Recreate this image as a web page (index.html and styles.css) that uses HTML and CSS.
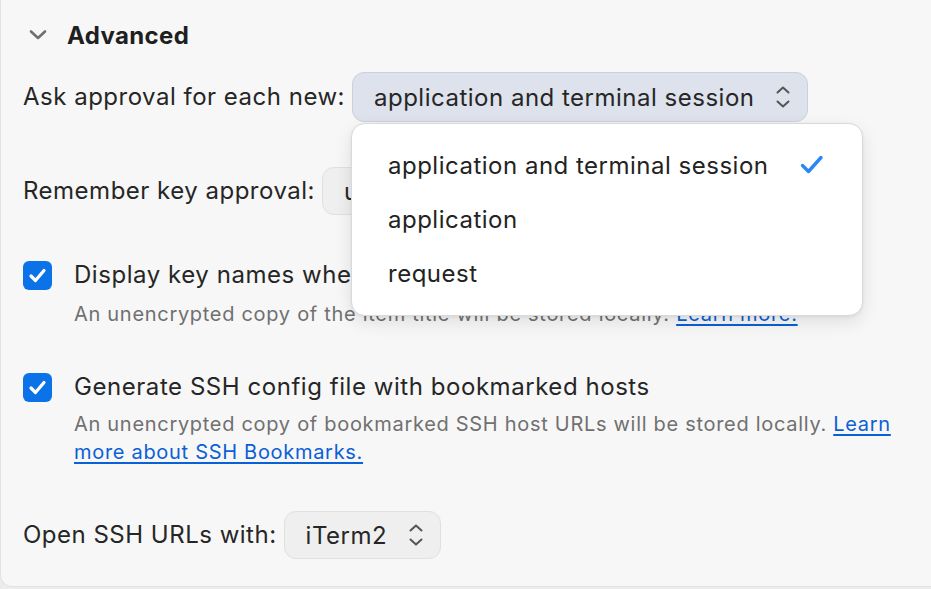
FILE: index.html
```html
<!DOCTYPE html>
<html>
<head>
<meta charset="utf-8">
<link rel="stylesheet" href="styles.css">
</head>
<body>
<div class="card">
  <div class="header">
    <svg class="chev" width="24" height="24" viewBox="0 0 24 24"><path d="M5 8.5 L12 15 L19 8.5" fill="none" stroke="#707070" stroke-width="2.6" stroke-linecap="round" stroke-linejoin="round"/></svg>
    <span class="title">Advanced</span>
  </div>

  <div class="row r1">
    <span class="label">Ask approval for each new:</span>
    <div class="select-wrap">
      <div class="select active">
        <span>application and terminal session</span>
        <svg class="updown" width="16" height="24" viewBox="0 0 16 24"><path d="M2.5 7.5 L8 2.5 L13.5 7.5 M2.5 16.5 L8 21.5 L13.5 16.5" fill="none" stroke="#555" stroke-width="2" stroke-linecap="round" stroke-linejoin="round"/></svg>
      </div>
      <div class="menu">
        <div class="item"><span>application and terminal session</span>
          <svg class="tick" width="24" height="22" viewBox="0 0 24 22"><path d="M2.5 11.5 L8.5 17.5 L21 3.5" fill="none" stroke="#2c86f6" stroke-width="3.4" stroke-linecap="round" stroke-linejoin="round"/></svg>
        </div>
        <div class="item"><span>application</span></div>
        <div class="item"><span>request</span></div>
      </div>
    </div>
  </div>

  <div class="row r2">
    <span class="label">Remember key approval:</span>
    <div class="select">
      <span>until 1Password locks</span>
      <svg class="updown" width="16" height="24" viewBox="0 0 16 24"><path d="M2.5 7.5 L8 2.5 L13.5 7.5 M2.5 16.5 L8 21.5 L13.5 16.5" fill="none" stroke="#555" stroke-width="2" stroke-linecap="round" stroke-linejoin="round"/></svg>
    </div>
  </div>

  <div class="check-row c1">
    <span class="box"><svg width="29" height="29" viewBox="0 0 29 29"><path d="M8 15 L12.5 19.5 L21 9.5" fill="none" stroke="#fff" stroke-width="3.2" stroke-linecap="round" stroke-linejoin="round"/></svg></span>
    <div class="check-text">
      <div class="check-label">Display key names when authorizing connections</div>
      <div class="hint">An unencrypted copy of the item title will be stored locally. <a href="#">Learn more.</a></div>
    </div>
  </div>

  <div class="check-row c2">
    <span class="box"><svg width="29" height="29" viewBox="0 0 29 29"><path d="M8 15 L12.5 19.5 L21 9.5" fill="none" stroke="#fff" stroke-width="3.2" stroke-linecap="round" stroke-linejoin="round"/></svg></span>
    <div class="check-text">
      <div class="check-label">Generate SSH config file with bookmarked hosts</div>
      <div class="hint">An unencrypted copy of bookmarked SSH host URLs will be stored locally. <a href="#">Learn more about SSH Bookmarks.</a></div>
    </div>
  </div>

  <div class="row r3">
    <span class="label">Open SSH URLs with:</span>
    <div class="select small">
      <span>iTerm2</span>
      <svg class="updown" width="16" height="24" viewBox="0 0 16 24"><path d="M2.5 7.5 L8 2.5 L13.5 7.5 M2.5 16.5 L8 21.5 L13.5 16.5" fill="none" stroke="#555" stroke-width="2" stroke-linecap="round" stroke-linejoin="round"/></svg>
    </div>
  </div>
</div>
</body>
</html>
```

FILE: styles.css
```css
html, body {
  margin: 0;
  padding: 0;
}
body {
  background: #ececec;
  width: 931px;
  height: 589px;
  overflow: hidden;
  font-family: Inter, "Noto Sans", "Liberation Sans", sans-serif;
  color: #262626;
}
.card {
  box-sizing: border-box;
  height: 587px;
  background: #f7f7f7;
  border-left: 1px solid #e2e2e2;
  border-bottom: 1px solid #e2e2e2;
  border-bottom-left-radius: 12px;
  padding: 14px 20px 0 22px;
}
.header {
  display: flex;
  align-items: center;
  height: 42px;
}
.chev {
  margin-left: 3px;
  margin-right: 17px;
}
.title {
  font-size: 24px;
  font-weight: 700;
  color: #1f1f1f;
  letter-spacing: 0.35px;
}
.row {
  display: flex;
  align-items: center;
  gap: 7px;
}
.label {
  font-size: 24px;
  line-height: 30px;
  letter-spacing: 0.5px;
}
.r1 { margin-top: 16px; height: 50px; }
.r2 { margin-top: 45px; height: 48px; }
.r3 { margin-top: 45px; height: 48px; }
.select-wrap {
  position: relative;
}
.select {
  box-sizing: border-box;
  height: 48px;
  display: flex;
  align-items: center;
  gap: 21px;
  padding: 0 16px 0 21px;
  border-radius: 12px;
  background: #efefef;
  border: 1px solid #e0e0e0;
  font-size: 24px;
  letter-spacing: 0.5px;
}
.select.active {
  height: 50px;
  background: #dde2ec;
  border-color: #cbd1dc;
}
.updown { flex: none; }
.menu {
  position: absolute;
  left: -1px;
  top: 51px;
  width: 512px;
  box-sizing: border-box;
  padding: 14px 0 15px 0;
  background: #ffffff;
  border: 1px solid #d9d9d9;
  border-radius: 14px;
  box-shadow: 0 6px 18px rgba(0,0,0,0.10), 0 1px 3px rgba(0,0,0,0.06);
  z-index: 5;
}
.item {
  height: 54px;
  display: flex;
  align-items: center;
  justify-content: space-between;
  padding: 0 38px 0 36px;
  font-size: 24px;
  letter-spacing: 0.5px;
  color: #232323;
}
.tick { flex: none; }
.check-row {
  display: flex;
  align-items: flex-start;
  gap: 22px;
}
.c1 { margin-top: 45px; }
.c2 { margin-top: 44px; }
.box {
  flex: none;
  width: 29px;
  height: 29px;
  margin-top: 0.5px;
  border-radius: 6px;
  background: #0b72e7;
  display: flex;
}
.check-text {
  flex: 1;
  min-width: 0;
}
.check-label {
  font-size: 24px;
  line-height: 30px;
  letter-spacing: 0.55px;
  white-space: nowrap;
}
.hint {
  margin-top: 10px;
  font-size: 20px;
  line-height: 28px;
  letter-spacing: 0.7px;
  color: #707070;
}
.c2 .hint {
  margin-top: 8px;
}
.hint a {
  color: #0a60d6;
  text-decoration: underline;
  text-underline-offset: 3px;
}
```
